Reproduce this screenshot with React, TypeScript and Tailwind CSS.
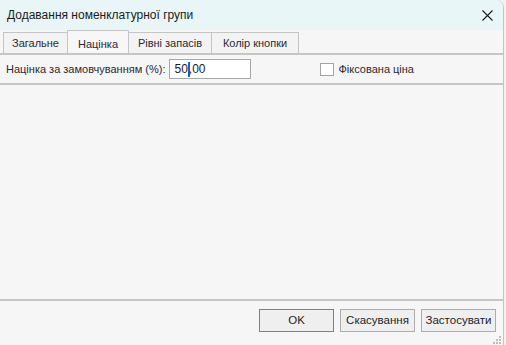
import React from "react";

const tabs = ["Загальне", "Націнка", "Рівні запасів", "Колір кнопки"];

function Grip() {
  const dots = [
    [6, 0],
    [3, 3],
    [6, 3],
    [0, 6],
    [3, 6],
    [6, 6],
  ];
  return (
    <svg width="8" height="8" viewBox="0 0 8 8" className="absolute right-[2px] bottom-[1px]">
      {dots.map(([x, y], i) => (
        <rect key={i} x={x} y={y} width="2" height="2" fill="#bdbdbd" />
      ))}
    </svg>
  );
}

export default function App() {
  return (
    <div
      className="flex w-[506px] h-[345px] bg-[#f4f2ec] overflow-hidden"
      style={{ fontFamily: '"Liberation Sans", Arial, sans-serif' }}
    >
      <div className="relative flex flex-col w-[504px] h-full bg-[#f6f6f6] border-r border-[#c4c4c4] rounded-tr-[8px] overflow-hidden">
        {/* title bar */}
        <div className="flex items-center justify-between h-[30px] bg-[#e9f6f7] pl-[7px] pr-[10px]">
          <span className="text-[12px] text-[#1b1b1b]">Додавання номенклатурної групи</span>
          <svg width="11" height="11" viewBox="0 0 11 11">
            <path d="M0.5 0.5 L10.5 10.5 M10.5 0.5 L0.5 10.5" stroke="#1b1b1b" strokeWidth="1.1" />
          </svg>
        </div>

        {/* tabs */}
        <div className="flex items-end h-[23px] pl-[3px]">
          {tabs.map((t, i) =>
            i === 1 ? (
              <div
                key={t}
                className="flex items-start justify-center h-[23px] w-[62px] pt-[5px] bg-[#f7f7f7] border border-b-0 border-[#c4c4c4] text-[11px] text-[#2a2a35]"
              >
                {t}
              </div>
            ) : (
              <div
                key={t}
                className={`flex items-center justify-center h-[21px] border border-b-0 border-[#c4c4c4] bg-[#f3f3f3] text-[11px] text-[#2a2a35] ${
                  i === 0 ? "w-[64px]" : i === 2 ? "w-[83px] border-l-0" : "w-[87px] border-l-0"
                } ${i === 0 ? "border-r-0" : ""}`}
              >
                {t}
              </div>
            )
          )}
        </div>

        {/* markup panel */}
        <div className="flex items-center h-[32px] border-t-2 border-b-2 border-[#c6c6c6] pl-[6px] text-[11px] text-[#2a2a35]">
          <span>Націнка за замовчуванням (%):</span>
          <div className="flex items-center ml-[4px] w-[82px] h-[20px] bg-white border border-[#a8a8a8] pl-[4px] text-[12px] text-[#1a1a2a]">
            50
            <span className="inline-block w-[2px] h-[15px] bg-[#1f5fd6] -mr-[1px]" />
            ,00
          </div>
          <div className="flex items-center ml-[69px]">
            <span className="w-[14px] h-[13px] bg-white border border-[#a4a4a4]" />
            <span className="ml-[4px]">Фіксована ціна</span>
          </div>
        </div>

        {/* empty area */}
        <div className="flex-1 border-b-2 border-[#c6c6c6]" />

        {/* buttons */}
        <div className="flex justify-end gap-[6px] h-[44px] pt-[8px] pr-[7px] text-[11.5px] text-[#1e1e28]">
          <button className="w-[75px] h-[23px] bg-[#efefef] border border-[#3b8ee6]">OK</button>
          <button className="w-[75px] h-[23px] bg-[#efefef] border border-[#adadad]">Скасування</button>
          <button className="w-[75px] h-[23px] bg-[#efefef] border border-[#adadad]">Застосувати</button>
        </div>
        <Grip />
      </div>
    </div>
  );
}
